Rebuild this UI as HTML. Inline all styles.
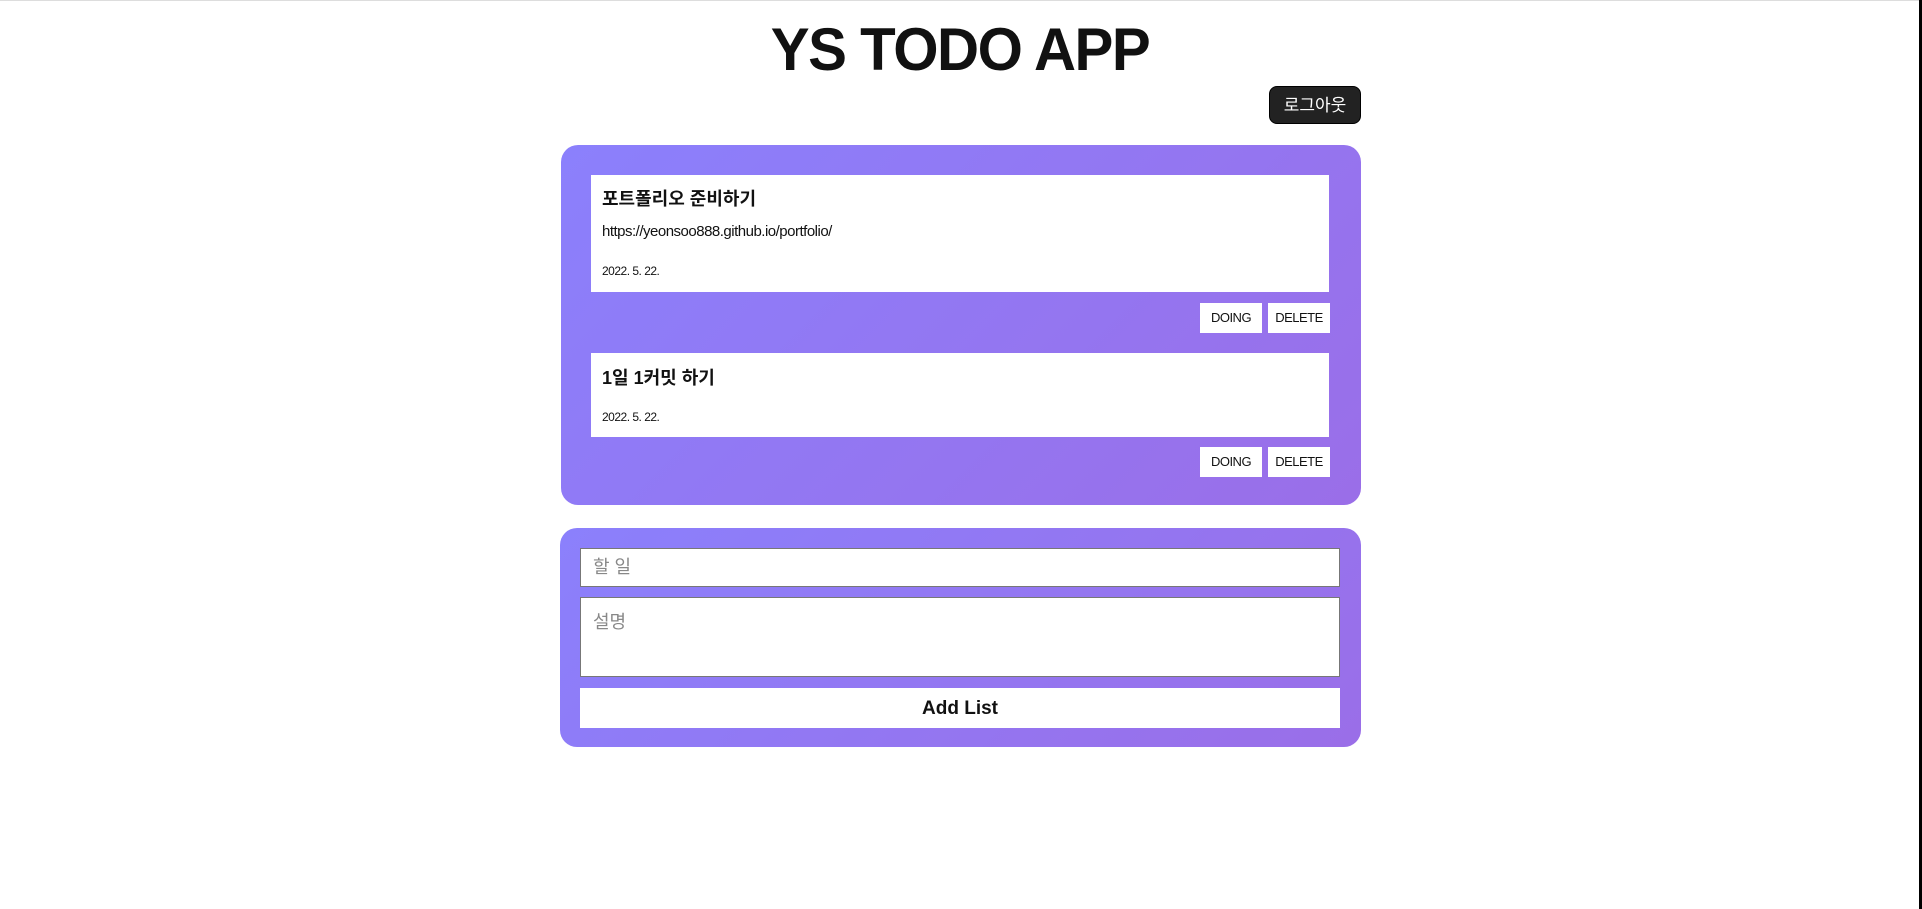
<!DOCTYPE html>
<html><head><meta charset="utf-8"><style>
*{box-sizing:border-box;margin:0;padding:0}
body{width:1922px;height:909px;background:#fff;position:relative;overflow:hidden;font-family:"Liberation Sans","Noto Sans CJK KR",sans-serif;color:#111}
.topline{position:absolute;left:0;top:0;width:1922px;height:1px;background:#ddd}
.rbar{position:absolute;right:0;top:0;width:3px;height:909px;background:#000}
h1{position:absolute;left:0;width:1920px;text-align:center;top:14px;font-size:60px;line-height:72px;font-weight:bold;letter-spacing:-1.5px;transform:scaleX(0.97)}
.logout{position:absolute;left:1269px;top:86px;width:92px;height:38px;background:#222;border-radius:8px;color:#fff;font-size:17px;line-height:38px;text-align:center;border:1px solid #000}
.panel{position:absolute;left:561px;width:800px;border-radius:17px;background:linear-gradient(135deg,#8b80fc 0%,#9a6ee8 100%)}
.card{position:absolute;left:30px;width:738px;background:#fff;padding:0 11px}
.ct{font-size:18px;font-weight:bold;position:absolute;left:11px}
.cu{font-size:15px;position:absolute;left:11px;letter-spacing:-0.5px}
.cd{font-size:12px;position:absolute;left:11px;letter-spacing:-0.5px}
.btn{position:absolute;width:62px;height:30px;background:#fff;font-size:13px;line-height:30px;text-align:center;letter-spacing:-0.5px}
.inp{position:absolute;left:20px;width:760px;background:#fff;border:1px solid #777;color:#888;font-size:18px;padding-left:12px}
</style></head><body>
<div class="topline"></div><div class="rbar"></div>
<h1>YS TODO APP</h1>
<div class="logout">로그아웃</div>
<div class="panel" style="top:145px;height:360px">
  <div class="card" style="top:30px;height:117px">
    <div class="ct" style="top:10px">포트폴리오 준비하기</div>
    <div class="cu" style="top:48px">https://yeonsoo888.github.io/portfolio/</div>
    <div class="cd" style="top:89px">2022. 5. 22.</div>
  </div>
  <div class="btn" style="left:639px;top:158px">DOING</div>
  <div class="btn" style="left:707px;top:158px">DELETE</div>
  <div class="card" style="top:208px;height:84px">
    <div class="ct" style="top:11px">1일 1커밋 하기</div>
    <div class="cd" style="top:57px">2022. 5. 22.</div>
  </div>
  <div class="btn" style="left:639px;top:302px">DOING</div>
  <div class="btn" style="left:707px;top:302px">DELETE</div>
</div>
<div class="panel" style="top:528px;height:219px;left:560px;width:801px">
  <div class="inp" style="top:20px;height:39px;line-height:37px">할 일</div>
  <div class="inp" style="top:69px;height:80px;padding-top:10px">설명</div>
  <div style="position:absolute;left:20px;top:160px;width:760px;height:40px;background:#fff;text-align:center;font-size:19px;font-weight:bold;line-height:42px">Add List</div>
</div>
</body></html>
